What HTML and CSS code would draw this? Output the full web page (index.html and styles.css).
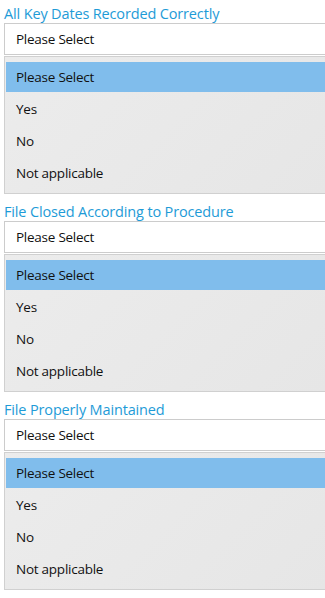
FILE: index.html
```html
<!DOCTYPE html>
<html lang="en">

<head>
    <meta charset="UTF-8">
    <meta name="viewport" content="width=device-width, initial-scale=1.0">
    <title>File Review</title>
    <link rel="stylesheet" href="styles.css">
</head>

<body>
    <div class="form">
        <div class="field">
            <label class="field-label">All Key Dates Recorded Correctly</label>
            <div class="select-box">Please Select</div>
            <ul class="options">
                <li class="option selected">Please Select</li>
                <li class="option">Yes</li>
                <li class="option">No</li>
                <li class="option">Not applicable</li>
            </ul>
        </div>

        <div class="field">
            <label class="field-label">File Closed According to Procedure</label>
            <div class="select-box">Please Select</div>
            <ul class="options">
                <li class="option selected">Please Select</li>
                <li class="option">Yes</li>
                <li class="option">No</li>
                <li class="option">Not applicable</li>
            </ul>
        </div>

        <div class="field">
            <label class="field-label">File Properly Maintained</label>
            <div class="select-box">Please Select</div>
            <ul class="options">
                <li class="option selected">Please Select</li>
                <li class="option">Yes</li>
                <li class="option">No</li>
                <li class="option">Not applicable</li>
            </ul>
        </div>
    </div>
</body>

</html>
```

FILE: styles.css
```css
* {
    margin: 0;
    padding: 0;
    box-sizing: border-box;
    font-family: 'Open Sans', 'Noto Sans', sans-serif;
}

:root {
    --label-color: #1e9bd7;
    --border-color: #cccccc;
    --list-bg: #e9e9e9;
    --selected-bg: #80bdec;
    --text-color: #111111;
}

body {
    background-color: #ffffff;
    color: var(--text-color);
}

.form {
    padding-left: 4px;
}

.field {
    margin-bottom: 4px;
}

.field-label {
    display: block;
    height: 23px;
    padding-top: 4px;
    font-size: 14.5px;
    letter-spacing: -0.15px;
    line-height: 19px;
    color: var(--label-color);
}

.select-box {
    height: 32px;
    padding-left: 11px;
    border: 1px solid var(--border-color);
    border-right: none;
    background-color: #ffffff;
    font-size: 13.5px;
    letter-spacing: -0.25px;
    line-height: 30px;
}

.options {
    list-style: none;
    display: flex;
    flex-direction: column;
    gap: 2px;
    margin-top: 1px;
    padding: 5px 0 5px 1px;
    border: 1px solid #d0d0d0;
    border-right: none;
    background: linear-gradient(135deg, #ececec, #e6e6e6);
}

.option {
    height: 30px;
    padding-left: 10px;
    font-size: 13.5px;
    letter-spacing: -0.25px;
    line-height: 30px;
}

.option.selected {
    background-color: var(--selected-bg);
}
```
